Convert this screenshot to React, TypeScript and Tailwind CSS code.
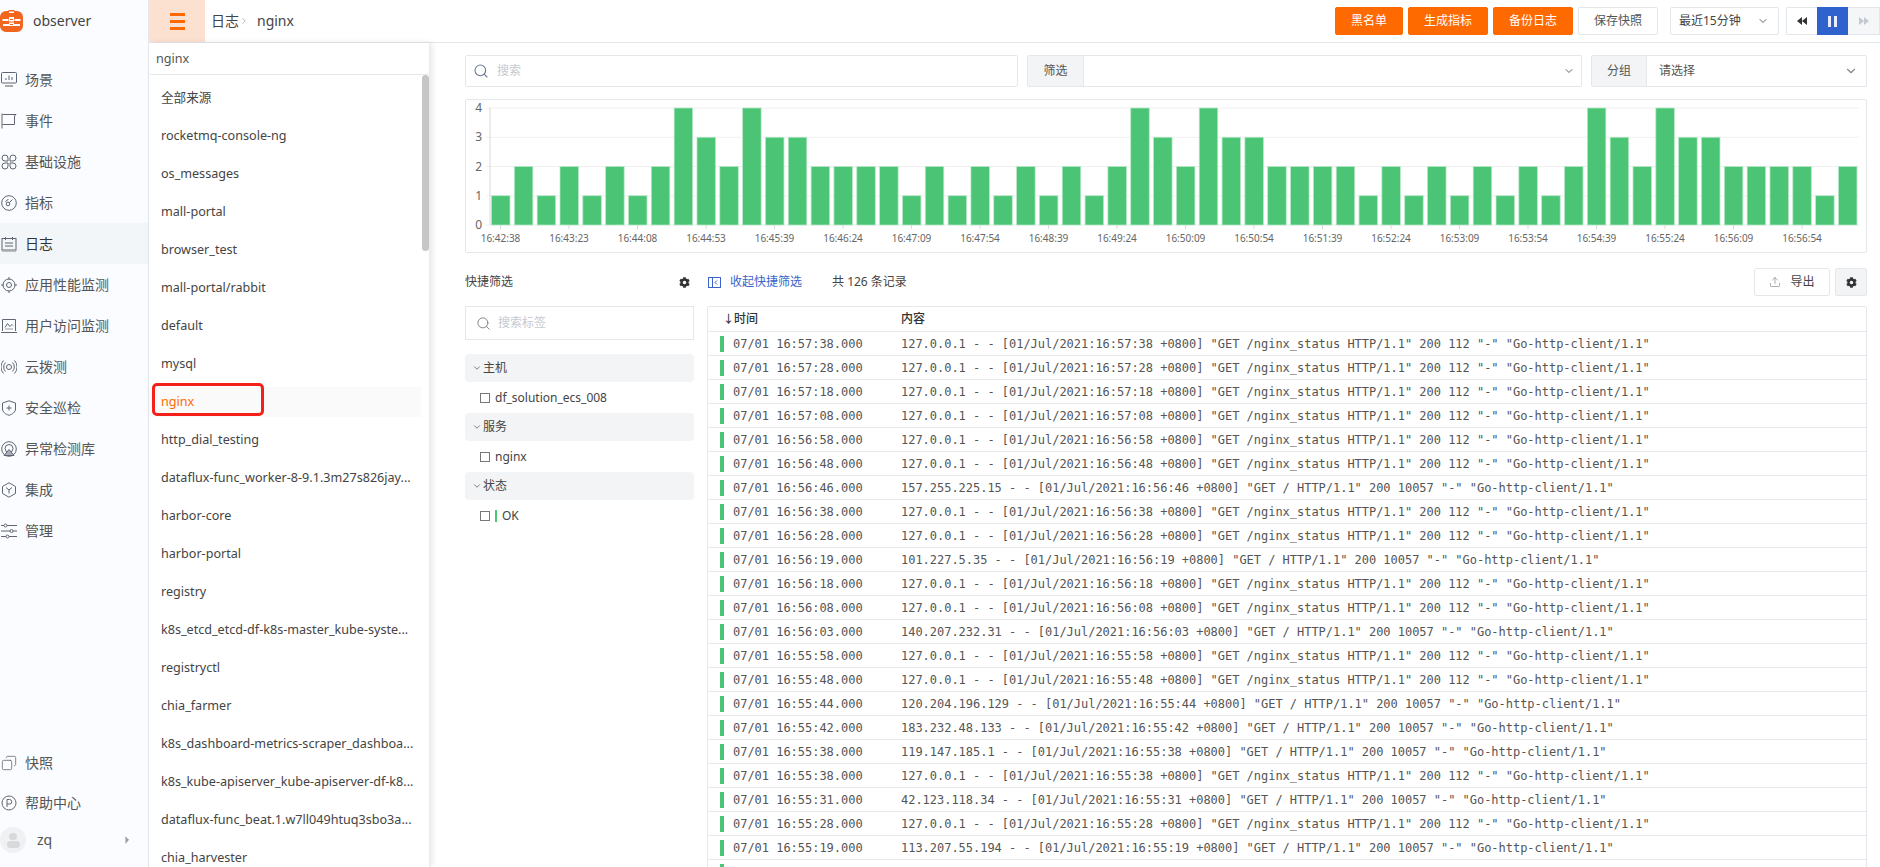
import { ChevronDown, ChevronRight, Copy, Search, Upload } from "lucide-react"
import { FaCog } from "react-icons/fa"

const menu = ["场景", "事件", "基础设施", "指标", "日志", "应用性能监测", "用户访问监测", "云拨测", "安全巡检", "异常检测库", "集成", "管理"]

const sources = [
  "全部来源", "rocketmq-console-ng", "os_messages", "mall-portal", "browser_test", "mall-portal/rabbit", "default", "mysql", "nginx",
  "http_dial_testing", "dataflux-func_worker-8-9.1.3m27s826jay...", "harbor-core", "harbor-portal", "registry",
  "k8s_etcd_etcd-df-k8s-master_kube-syste...", "registryctl", "chia_farmer", "k8s_dashboard-metrics-scraper_dashboa...",
  "k8s_kube-apiserver_kube-apiserver-df-k8...", "dataflux-func_beat.1.w7ll049htuq3sbo3a...", "chia_harvester",
]

const pattern = [1, 2, 1, 2, 1, 2, 1, 2, 4, 3, 2, 4, 3, 3, 2, 2, 2, 2, 1, 2]
const bars = [...pattern, ...pattern, ...pattern]
const ticks = ["16:42:38", "16:43:23", "16:44:08", "16:44:53", "16:45:39", "16:46:24", "16:47:09", "16:47:54", "16:48:39", "16:49:24", "16:50:09", "16:50:54", "16:51:39", "16:52:24", "16:53:09", "16:53:54", "16:54:39", "16:55:24", "16:56:09", "16:56:54"]

const logs: [string, string, boolean][] = [
  ["57:38", "127.0.0.1", true], ["57:28", "127.0.0.1", true], ["57:18", "127.0.0.1", true], ["57:08", "127.0.0.1", true],
  ["56:58", "127.0.0.1", true], ["56:48", "127.0.0.1", true], ["56:46", "157.255.225.15", false], ["56:38", "127.0.0.1", true],
  ["56:28", "127.0.0.1", true], ["56:19", "101.227.5.35", false], ["56:18", "127.0.0.1", true], ["56:08", "127.0.0.1", true],
  ["56:03", "140.207.232.31", false], ["55:58", "127.0.0.1", true], ["55:48", "127.0.0.1", true], ["55:44", "120.204.196.129", false],
  ["55:42", "183.232.48.133", false], ["55:38", "119.147.185.1", false], ["55:38", "127.0.0.1", true], ["55:31", "42.123.118.34", false],
  ["55:28", "127.0.0.1", true], ["55:19", "113.207.55.194", false],
]

const MenuIcon = ({ index }: { index: number }) => {
  const base = { className: "w-4 h-4 shrink-0 ml-[1px] text-[#5f6672]", viewBox: "0 0 16 16", fill: "none", stroke: "currentColor", strokeWidth: 1 }
  switch (index) {
    case 0:
      return <svg {...base}><rect x="0.5" y="0.5" width="15" height="10.500" rx="1" /><path d="M5 8V6M8 8V3.500M11 8V5" /><path d="M4 14h8" stroke="#aaa" strokeWidth="2" /></svg>
    case 1:
      return <svg {...base}><path d="M1 0.500v15" strokeWidth="1.500" stroke="#999" /><path d="M1.500 1.500h13.500l-1.500 1.500v8.500H1.500" /></svg>
    case 2:
      return <svg {...base}><path d="M7 7H4a3 3 0 1 1 3-3zM9 7h3a3 3 0 1 0-3-3zM7 9H4a3 3 0 1 0 3 3zM9 9h3a3 3 0 1 1-3 3z" /></svg>
    case 3:
      return <svg {...base}><circle cx="8" cy="8" r="7.300" /><circle cx="7" cy="9" r="1.800" /><path d="M8.300 7.700 11.500 4.500M4.500 7a4 4 0 0 1 3-2.500" /></svg>
    case 4:
      return <svg {...base}><rect x="1" y="2.500" width="14" height="11.500" /><path d="M4.500 1v3M11.500 1v3M4 7h8M4 10h8" /><path d="M1 15h14" stroke="#aaa" strokeWidth="1.500" /></svg>
    case 5:
      return <svg {...base}><circle cx="8" cy="8" r="6" /><circle cx="8" cy="8" r="2.500" /><path d="M8 0v2.500M8 13.500V16M0 8h2.500M13.500 8H16" /></svg>
    case 6:
      return <svg {...base}><path d="M1.500 13V1.500h13V13" /><path d="M0 14.500h16" /><path d="M4 9.500 6.500 5.500l2.500 3 2-2 1 1" /><path d="M4 11h8" stroke="#999" /></svg>
    case 7:
      return <svg {...base}><circle cx="8" cy="8" r="2.500" /><path d="M4.500 3.500a6.500 6.500 0 0 0 0 9M11.500 3.500a6.500 6.500 0 0 1 0 9M2.500 1.500a9.500 9.500 0 0 0 0 13M13.500 1.500a9.500 9.500 0 0 1 0 13" /></svg>
    case 8:
      return <svg {...base}><path d="M8 .8 14.500 3v6c0 3-3 5.200-6.500 6.300C4.500 14.200 1.500 12 1.500 9V3z" /><path d="M8 5.500v5M5.500 8h5" /></svg>
    case 9:
      return <svg {...base}><circle cx="8" cy="8" r="7.300" /><circle cx="8" cy="7.500" r="4" /><path d="M3 14.500 8 8.500l5 6z" fill="#aab0ba" /></svg>
    case 10:
      return <svg {...base}><path d="M8 .8 14.500 4.500v7L8 15.200 1.500 11.500v-7z" /><path d="M5 5.500 8 8l3-2.500M8 8v3.500" /></svg>
    default:
      return <svg {...base}><path d="M0 2.500h3M6 2.500h10M0 8h9M12 8h4M0 13.500h5M8 13.500h8" /><circle cx="4.500" cy="2.500" r="1.500" /><circle cx="10.500" cy="8" r="1.500" /><circle cx="6.500" cy="13.500" r="1.500" /></svg>
  }
}

const Logo = () => (
  <svg className="w-[23px] h-[22px]" viewBox="0 0 23 22">
    <path d="M6 1h2.500V0h6v1H17a6 6 0 0 1 6 6v9a6 6 0 0 1-6 6H6a6 6 0 0 1-6-6V7a6 6 0 0 1 6-6z" fill="#f2651f" />
    <path d="M9 1.500h5V3H9zM2.500 9h6V11h-6zM14.500 9h6V11h-6zM9 7h5v4.500H9zM3 14h6v2H3zM14 14h6v2h-6zM9 12.500h5V16H9z" fill="#fff" />
    <path d="M10 9h3v1h-3zM10 14h3v1h-3z" fill="#f2651f" />
  </svg>
)

const Sidebar = () => (
  <aside className="w-[149px] shrink-0 flex flex-col bg-[#fafcff] border-r border-[#e4e7ec]">
    <div className="h-[43px] flex items-center gap-[10px] pb-[2px] text-sm text-[#444]">
      <Logo />
      <span>observer</span>
    </div>
    <nav className="mt-[16px] flex flex-col">
      {menu.map((label, i) => (
        <div key={label} className={`h-[41px] flex items-center gap-[8px] text-sm ${i === 4 ? "bg-[#f3f6f9] text-[#333]" : "text-[#555]"}`}>
          <MenuIcon index={i} />
          <span>{label}</span>
        </div>
      ))}
    </nav>
    <div className="mt-auto flex flex-col">
      <div className="h-[40px] flex items-center gap-[8px] text-sm text-[#555]">
        <Copy className="ml-[1px] w-4 h-4 text-[#666] -scale-x-100" strokeWidth={1.2} />
        <span>快照</span>
      </div>
      <div className="h-[40px] flex items-center gap-[8px] text-sm text-[#555]">
        <svg className="ml-[1px] w-4 h-4 text-[#666]" viewBox="0 0 16 16" fill="none" stroke="currentColor">
          <circle cx="8" cy="8" r="7" />
          <path d="M6 12V4.500h2.500a2 2 0 0 1 0 4.500H6" />
        </svg>
        <span>帮助中心</span>
      </div>
      <div className="h-[34px] mb-[10px] flex items-center text-sm text-[#555]">
        <div className="w-[26px] h-[26px] rounded-full bg-[#f0f1f3] flex flex-col items-center justify-center gap-[1px]">
          <div className="w-[8px] h-[7px] rounded-full bg-[#d8d9dc]" />
          <div className="w-[13px] h-[7px] rounded-full bg-[#d8d9dc]" />
        </div>
        <span className="ml-[11px]">zq</span>
        <ChevronRight className="ml-auto mr-[15px] w-3 h-3 text-[#999] fill-[#999]" />
      </div>
    </div>
  </aside>
)

const HeaderButton = ({ label }: { label: string }) => (
  <button className="h-[28px] px-[15px] text-xs text-white bg-[#ff6a00] rounded-[2px] border border-[#ff6a00]">{label}</button>
)

const Header = () => (
  <header className="h-[43px] shrink-0 flex items-center bg-white border-b border-[#e4e7ec]">
    <div className="w-[56px] h-full bg-[#fde1d0] flex flex-col items-center justify-center gap-[4px]">
      <div className="w-[15px] h-[3px] bg-[#ff6a00]" />
      <div className="w-[15px] h-[3px] bg-[#ff6a00]" />
      <div className="w-[15px] h-[3px] bg-[#ff6a00]" />
    </div>
    <div className="ml-[6px] flex items-center text-sm text-[#444]">
      <span>日志</span>
      <ChevronRight className="w-[10px] h-[10px] text-[#aaa]" />
      <span className="ml-[8px]">nginx</span>
    </div>
    <div className="ml-auto flex items-center">
      <div className="flex items-center gap-[5px]">
        <HeaderButton label="黑名单" />
        <HeaderButton label="生成指标" />
        <HeaderButton label="备份日志" />
        <button className="h-[28px] w-[80px] text-xs text-[#555] bg-white rounded-[2px] border border-[#e2e5ea]">保存快照</button>
      </div>
      <div className="ml-[12px] w-[109px] h-[28px] flex items-center justify-between pl-[8px] pr-[9px] text-xs text-[#444] border border-[#e2e5ea] rounded-[2px]">
        <span>最近15分钟</span>
        <ChevronDown className="w-[12px] h-[12px] text-[#666]" />
      </div>
      <div className="ml-[7px] h-[28px] flex">
        <div className="w-[31px] flex items-center justify-center border border-[#e2e5ea] border-r-0 rounded-l-[2px]">
          <svg className="w-[10px] h-[8px] text-[#333]" viewBox="0 0 10 8" fill="currentColor"><path d="M5 0v8L0 4zM10 0v8L5 4z" /></svg>
        </div>
        <div className="w-[31px] bg-[#2f62cd] flex items-center justify-center gap-[3px]">
          <div className="w-[3px] h-[11px] bg-[#e8eefb]" />
          <div className="w-[3px] h-[11px] bg-[#e8eefb]" />
        </div>
        <div className="w-[32px] flex items-center justify-center bg-[#f5f6f8] border border-[#e2e5ea] border-l-0">
          <svg className="w-[10px] h-[8px] text-[#c4c8d0]" viewBox="0 0 10 8" fill="currentColor"><path d="M0 0v8l5-4zM5 0v8l5-4z" /></svg>
        </div>
      </div>
    </div>
  </header>
)

const SourcePanel = () => (
  <div className="relative w-[280px] shrink-0 flex flex-col bg-white shadow-[3px_0_6px_rgba(0,0,0,0.1)] overflow-hidden">
    <div className="mt-[1px] h-[31px] shrink-0 flex items-center pl-[7px] pt-[1px] text-[12.6px] text-[#555] bg-white border-b border-[#e4e7ec] rounded-[2px]">nginx</div>
    <div className="pt-[8px] flex flex-col w-[272px]">
      {sources.map((s) => (
        <div key={s} className={`h-[30px] mb-[8px] shrink-0 flex items-center pl-[12px] text-[12.6px] whitespace-nowrap ${s === "nginx" ? "text-[#ff6a00] bg-[#fafafa]" : "text-[#444]"}`}>{s}</div>
      ))}
    </div>
    <div className="absolute right-0 top-[32px] w-[7px] h-[176px] rounded-[4px] bg-[#c6c6c6]" />
    <div className="absolute left-[3px] top-[340px] w-[112px] h-[33px] border-[3px] border-[#f5201a] rounded-[5px]" />
  </div>
)

const Chart = () => (
  <div className="mt-[12px] h-[154px] border border-[#e4e7ec] rounded-[2px] overflow-hidden">
    <svg width="1400" height="152" className="block" fontFamily="'Noto Sans', sans-serif">
      {[0, 1, 2, 3, 4].map((v) => (
        <g key={v}>
          <line x1="20" x2="1393" y1={125 - v * 29.25} y2={125 - v * 29.25} stroke="#f0f0f0" />
          <text x="16" y={129 - v * 29.25} fontSize="12" fill="#666" textAnchor="end">{v}</text>
        </g>
      ))}
      <line x1="24" x2="24" y1="8" y2="125" stroke="#d9d9d9" />
      {bars.map((v, i) => (
        <rect key={i} x={25.500 + i * 22.83} y={125 - v * 29.25} width="18.500" height={v * 29.25} fill="#4bc475" stroke="#b8e8c8" strokeWidth="0.75" />
      ))}
      {ticks.map((t, i) => (
        <g key={i}>
          <line x1={34.500 + i * 68.5} x2={34.500 + i * 68.5} y1="125" y2="129" stroke="#d9d9d9" />
          <text x={34.500 + i * 68.5} y="142" fontSize="10" fill="#666" textAnchor="middle">{t}</text>
        </g>
      ))}
    </svg>
  </div>
)

const FilterGroup = ({ title, children }: { title: string; children: React.ReactNode }) => (
  <div className="flex flex-col">
    <div className="h-[28px] flex items-center bg-[#f3f4f6] rounded-[4px] pl-[7px] text-[12px] text-[#444]">
      <ChevronDown className="w-[10px] h-[10px] text-[#666] mr-[1px]" />
      {title}
    </div>
    <div className="h-[31px] flex items-center pl-[15px] text-[12px] text-[#444]">
      <div className="w-[10px] h-[10px] border border-[#777] mr-[5px]" />
      {children}
    </div>
  </div>
)

const LogRow = ({ time, ip, status }: { time: string; ip: string; status: boolean }) => {
  const stamp = `[01/Jul/2021:16:${time} +0800]`
  const text = status
    ? `${ip} - - ${stamp} "GET /nginx_status HTTP/1.1" 200 112 "-" "Go-http-client/1.1"`
    : `${ip} - - ${stamp} "GET / HTTP/1.1" 200 10057 "-" "Go-http-client/1.1"`
  return (
    <div className="h-[24px] first:h-[25px] shrink-0 flex items-center border-b border-[#e4e7ec]">
      <div className="ml-[12px] w-[4px] h-[16px] bg-[#4bc475]" />
      <span className="ml-[9px] w-[168px] shrink-0">07/01 16:{time}.000</span>
      <span className="whitespace-nowrap">{text}</span>
    </div>
  )
}

export default function App() {
  return (
    <div className="h-[867px] w-[1880px] flex overflow-hidden bg-white font-['Noto_Sans','Noto_Sans_CJK_SC',sans-serif]">
      <Sidebar />
      <div className="flex-1 min-w-0 flex flex-col">
        <Header />
        <div className="flex-1 min-h-0 flex">
          <SourcePanel />
          <main className="flex-1 min-w-0 pl-[36px] pr-[13px] pt-[12px]">
            <div className="h-[32px] flex gap-[9px] text-xs">
              <div className="w-[553px] flex items-center pl-[7px] border border-[#e4e7ec] rounded-[2px] text-[#c6c9d0]">
                <Search className="w-[16px] h-[16px] text-[#6b7a90] mr-[8px]" strokeWidth={1.6} />
                搜索
              </div>
              <div className="flex-1 flex border border-[#e4e7ec] rounded-[2px]">
                <div className="w-[56px] flex items-center justify-center bg-[#f3f4f6] border-r border-[#e4e7ec] text-[#555]">筛选</div>
                <div className="flex-1 flex items-center justify-end pr-[6px]"><ChevronDown className="w-[12px] h-[12px] text-[#666]" /></div>
              </div>
              <div className="w-[276px] flex border border-[#e4e7ec] rounded-[2px]">
                <div className="w-[55px] flex items-center justify-center bg-[#f3f4f6] border-r border-[#e4e7ec] text-[#555]">分组</div>
                <div className="flex-1 flex items-center justify-between pl-[12px] pr-[8px] text-[#555]">
                  <span>请选择</span>
                  <ChevronDown className="w-[14px] h-[14px] text-[#888]" />
                </div>
              </div>
            </div>
            <Chart />
            <div className="mt-[15px] flex gap-[14px]">
              <section className="w-[229px] shrink-0">
                <div className="h-[28px] flex items-center justify-between pr-[4px] text-xs text-[#444]">
                  <span>快捷筛选</span>
                  <FaCog className="w-[11px] h-[11px] text-[#333]" />
                </div>
                <div className="mt-[10px] h-[34px] flex items-center pl-[10px] border border-[#e4e7ec] text-xs text-[#c6c9d0]">
                  <Search className="w-[15px] h-[15px] text-[#777] mr-[7px]" strokeWidth={1.4} />
                  搜索标签
                </div>
                <div className="mt-[14px]">
                  <FilterGroup title="主机">df_solution_ecs_008</FilterGroup>
                  <FilterGroup title="服务">nginx</FilterGroup>
                  <FilterGroup title="状态">
                    <div className="w-[2px] h-[12px] bg-[#4bc475] mr-[5px]" />
                    OK
                  </FilterGroup>
                </div>
              </section>
              <section className="flex-1 min-w-0">
                <div className="h-[28px] flex items-center text-xs">
                  <svg className="w-[13px] h-[13px] text-[#3b63c9]" viewBox="0 0 13 13" fill="none" stroke="currentColor">
                    <rect x="0.5" y="1.500" width="12" height="10" />
                    <path d="M4.500 1.500v10M9 4.500 7 6.500l2 2" />
                  </svg>
                  <span className="ml-[9px] text-[#3b63c9]">收起快捷筛选</span>
                  <span className="ml-[30px] text-[#444]">共 126 条记录</span>
                  <button className="ml-auto w-[76px] h-[28px] flex items-center justify-center gap-[9px] border border-[#e4e7ec] rounded-[2px] text-[#444]">
                    <Upload className="w-[12px] h-[12px] text-[#777]" strokeWidth={1.2} />
                    导出
                  </button>
                  <button className="ml-[5px] w-[32px] h-[28px] flex items-center justify-center bg-[#f3f4f6] border border-[#e4e7ec] rounded-[2px]">
                    <FaCog className="w-[11px] h-[11px] text-[#333]" />
                  </button>
                </div>
                <div className="mt-[10px] -ml-[1px] border border-[#e4e7ec] rounded-t-[2px] h-[600px] overflow-hidden flex flex-col font-['DejaVu_Sans_Mono',monospace] text-[12px] tracking-[-0.025px] text-[#555]">
                  <div className="h-[25px] shrink-0 flex items-center border-b border-[#e4e7ec] font-['Noto_Sans','Noto_Sans_CJK_SC',sans-serif] font-medium text-[#333]">
                    <span className="ml-[15px] w-[11px] text-[11px]">↓</span>
                    <span className="w-[167px]">时间</span>
                    <span>内容</span>
                  </div>
                  {logs.map(([time, ip, status], i) => (
                    <LogRow key={i} time={time} ip={ip} status={status} />
                  ))}
                  <div className="h-[24px] shrink-0 flex items-center">
                    <div className="ml-[12px] w-[4px] h-[16px] bg-[#4bc475]" />
                  </div>
                </div>
              </section>
            </div>
          </main>
        </div>
      </div>
    </div>
  )
}
